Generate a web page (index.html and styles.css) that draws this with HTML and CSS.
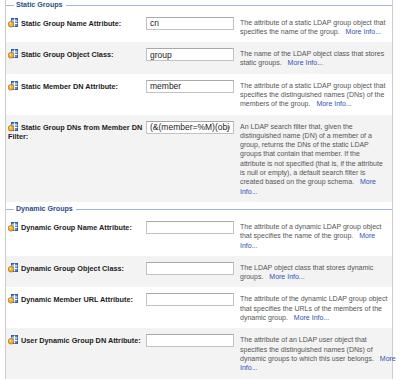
FILE: index.html
```html
<!DOCTYPE html>
<html lang="en">
<head>
    <meta charset="UTF-8">
    <title>LDAP Groups</title>
    <link rel="stylesheet" href="styles.css">
</head>
<body>

<svg class="defs" width="0" height="0">
    <symbol id="attr-icon" viewBox="0 0 10 10">
        <rect x="3.5" y="0.5" width="6" height="8" fill="#5d8fcf" stroke="#2f5d9c"/>
        <line x1="3.5" y1="3" x2="9.5" y2="3" stroke="#fff"/>
        <line x1="3.5" y1="5.5" x2="9.5" y2="5.5" stroke="#fff"/>
        <line x1="6.5" y1="0.5" x2="6.5" y2="8.5" stroke="#fff"/>
        <circle cx="3" cy="6.3" r="2.8" fill="#f0b030" stroke="#b8741a" stroke-width="0.8"/>
        <circle cx="2.5" cy="5.6" r="1" fill="#fbe08a"/>
    </symbol>
</svg>

<div class="panel">
    <section class="group">
        <div class="group-title"><span>Static Groups</span></div>
        <div class="row">
            <label class="field-label"><svg class="icon"><use href="#attr-icon"/></svg>Static Group Name Attribute:</label>
            <div class="field"><input type="text" value="cn"></div>
            <p class="desc">The attribute of a static LDAP group object that<br>specifies the name of the group. <a href="#">More Info...</a></p>
        </div>
        <div class="row">
            <label class="field-label"><svg class="icon"><use href="#attr-icon"/></svg>Static Group Object Class:</label>
            <div class="field"><input type="text" value="group"></div>
            <p class="desc">The name of the LDAP object class that stores<br>static groups. <a href="#">More Info...</a></p>
        </div>
        <div class="row">
            <label class="field-label"><svg class="icon"><use href="#attr-icon"/></svg>Static Member DN Attribute:</label>
            <div class="field"><input type="text" value="member"></div>
            <p class="desc">The attribute of a static LDAP group object that<br>specifies the distinguished names (DNs) of the<br>members of the group. <a href="#">More Info...</a></p>
        </div>
        <div class="row">
            <label class="field-label"><svg class="icon"><use href="#attr-icon"/></svg>Static Group DNs from Member DN Filter:</label>
            <div class="field"><input type="text" value="(&amp;(member=%M)(objectclass=group))"></div>
            <p class="desc">An LDAP search filter that, given the<br>distinguished name (DN) of a member of a<br>group, returns the DNs of the static LDAP<br>groups that contain that member. If the<br>attribute is not specified (that is, if the attribute<br>is null or empty), a default search filter is<br>created based on the group schema. <a href="#">More<br>Info...</a></p>
        </div>
    </section>

    <section class="group">
        <div class="group-title"><span>Dynamic Groups</span></div>
        <div class="row">
            <label class="field-label"><svg class="icon"><use href="#attr-icon"/></svg>Dynamic Group Name Attribute:</label>
            <div class="field"><input type="text" value=""></div>
            <p class="desc">The attribute of a dynamic LDAP group object<br>that specifies the name of the group. <a href="#">More<br>Info...</a></p>
        </div>
        <div class="row">
            <label class="field-label"><svg class="icon"><use href="#attr-icon"/></svg>Dynamic Group Object Class:</label>
            <div class="field"><input type="text" value=""></div>
            <p class="desc">The LDAP object class that stores dynamic<br>groups. <a href="#">More Info...</a></p>
        </div>
        <div class="row">
            <label class="field-label"><svg class="icon"><use href="#attr-icon"/></svg>Dynamic Member URL Attribute:</label>
            <div class="field"><input type="text" value=""></div>
            <p class="desc">The attribute of the dynamic LDAP group object<br>that specifies the URLs of the members of the<br>dynamic group. <a href="#">More Info...</a></p>
        </div>
        <div class="row">
            <label class="field-label"><svg class="icon"><use href="#attr-icon"/></svg>User Dynamic Group DN Attribute:</label>
            <div class="field"><input type="text" value=""></div>
            <p class="desc">The attribute of an LDAP user object that<br>specifies the distinguished names (DNs) of<br>dynamic groups to which this user belongs. <a href="#">More<br>Info...</a></p>
        </div>
    </section>
</div>

</body>
</html>
```

FILE: styles.css
```css
body {
    margin: 0;
    background-color: #fff;
    font-family: "Liberation Sans", Arial, sans-serif;
    font-size: 7.3px;
    color: #222;
}
.defs {
    position: absolute;
}
.panel {
    width: 386px;
    margin: -2.5px 0 0 5px;
    border-left: 1px solid #cdcdcd;
    border-right: 1px solid #cdcdcd;
}
.group-title {
    display: flex;
    align-items: center;
    height: 13px;
    padding-top: 3px;
    box-sizing: border-box;
    line-height: 9px;
}
.group-title::before {
    content: "";
    width: 8px;
    height: 1px;
    background-color: #9db8dc;
    margin-right: 2px;
}
.group-title::after {
    content: "";
    flex: 1;
    height: 1px;
    background-color: #9db8dc;
    margin-left: 3px;
}
.group-title span {
    font-weight: bold;
    color: #2b4c8a;
    font-size: 7.1px;
}
.row {
    display: grid;
    grid-template-columns: 138px 94px 1fr;
    padding: 7px 2px 6px 2px;
    line-height: 9.3px;
}
.row:nth-child(odd) {
    background-color: #f3f3f3;
}
.field-label {
    font-weight: bold;
    color: #1c1c1c;
}
.icon {
    width: 10px;
    height: 10px;
    vertical-align: -2px;
    margin-right: 3px;
}
.field input {
    width: 88px;
    height: 13px;
    margin: -1px 0 0;
    padding: 0 3px;
    box-sizing: border-box;
    border: 1px solid #c2c2c2;
    border-top-color: #a9a9a9;
    background-color: #fff;
    font-family: "Liberation Sans", Arial, sans-serif;
    font-size: 8.5px;
    color: #222;
    outline: none;
}
.desc {
    margin: 0;
    font-size: 7px;
    color: #555;
    white-space: nowrap;
}
.desc a {
    color: #2f52b3;
    text-decoration: none;
    margin-left: 4px;
}
```
